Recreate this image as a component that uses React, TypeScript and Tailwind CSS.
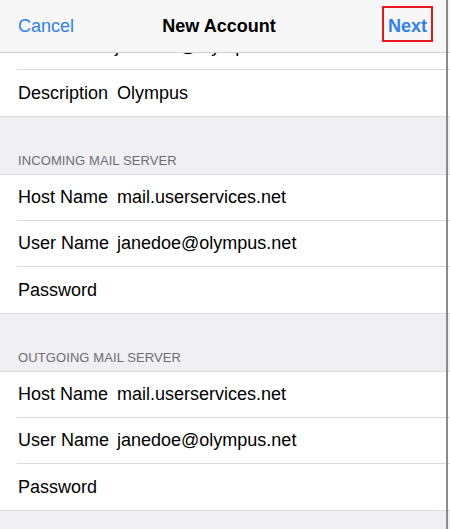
import React from "react";

const font = { fontFamily: '"Liberation Sans", Arial, sans-serif' };

function Row({ label, value, last }: { label: string; value?: string; last?: boolean }) {
  return (
    <div className="bg-white pl-[17px]">
      <div
        className={`h-[46px] flex items-center text-[18px] text-black ${
          last ? "" : "border-b border-[#d9d9de]"
        }`}
      >
        <span className="pl-[1px] w-[100px] shrink-0">{label}</span>
        {value ? <span>{value}</span> : null}
      </div>
    </div>
  );
}

function Header({ text }: { text: string }) {
  return (
    <div className="h-[58px] flex items-end pb-[4px] pl-[18px] border-b border-[#dcdce0]">
      <span className="text-[13px] text-[#6d6d72] tracking-[0.1px]">{text}</span>
    </div>
  );
}

export default function App() {
  return (
    <div className="relative w-[450px] h-[529px] overflow-hidden bg-[#efeff4]" style={font}>
      <div className="relative z-10 h-[53px] bg-[#f7f7f7] border-b border-[#d2d2d6] grid grid-cols-[1fr_auto_1fr] items-center pl-[18px] pr-[23px]">
        <span className="text-[18px] text-[#2f7ff0]">Cancel</span>
        <span className="text-center text-[18px] font-bold text-black mr-[7px]">New Account</span>
        <span className="text-right text-[18px] font-bold text-[#2f7ff0]">Next</span>
        <div className="absolute left-[382px] top-[6px] w-[51px] h-[36px] border-2 border-[#e5161f]" />
      </div>
      <div className="-mt-[30px]">
        <div className="bg-white pl-[17px]">
          <div className="h-[47px] flex items-center text-[18px] text-black border-b border-[#d9d9de]">
            <span className="pl-[1px] w-[98px] shrink-0"></span>
            <span>janedoe@olympus.net</span>
          </div>
        </div>
        <div className="border-b border-[#dcdce0]">
          <Row label="Description" value="Olympus" last />
        </div>
        <Header text="INCOMING MAIL SERVER" />
        <div className="border-b border-[#dcdce0]">
          <Row label="Host Name" value="mail.userservices.net" />
          <Row label="User Name" value="janedoe@olympus.net" />
          <Row label="Password" last />
        </div>
        <Header text="OUTGOING MAIL SERVER" />
        <div className="border-b border-[#dcdce0]">
          <Row label="Host Name" value="mail.userservices.net" />
          <Row label="User Name" value="janedoe@olympus.net" />
          <Row label="Password" last />
        </div>
      </div>
      <div className="absolute top-0 left-[446px] w-[2px] h-full bg-[#8c8c8c] z-20" />
    </div>
  );
}
